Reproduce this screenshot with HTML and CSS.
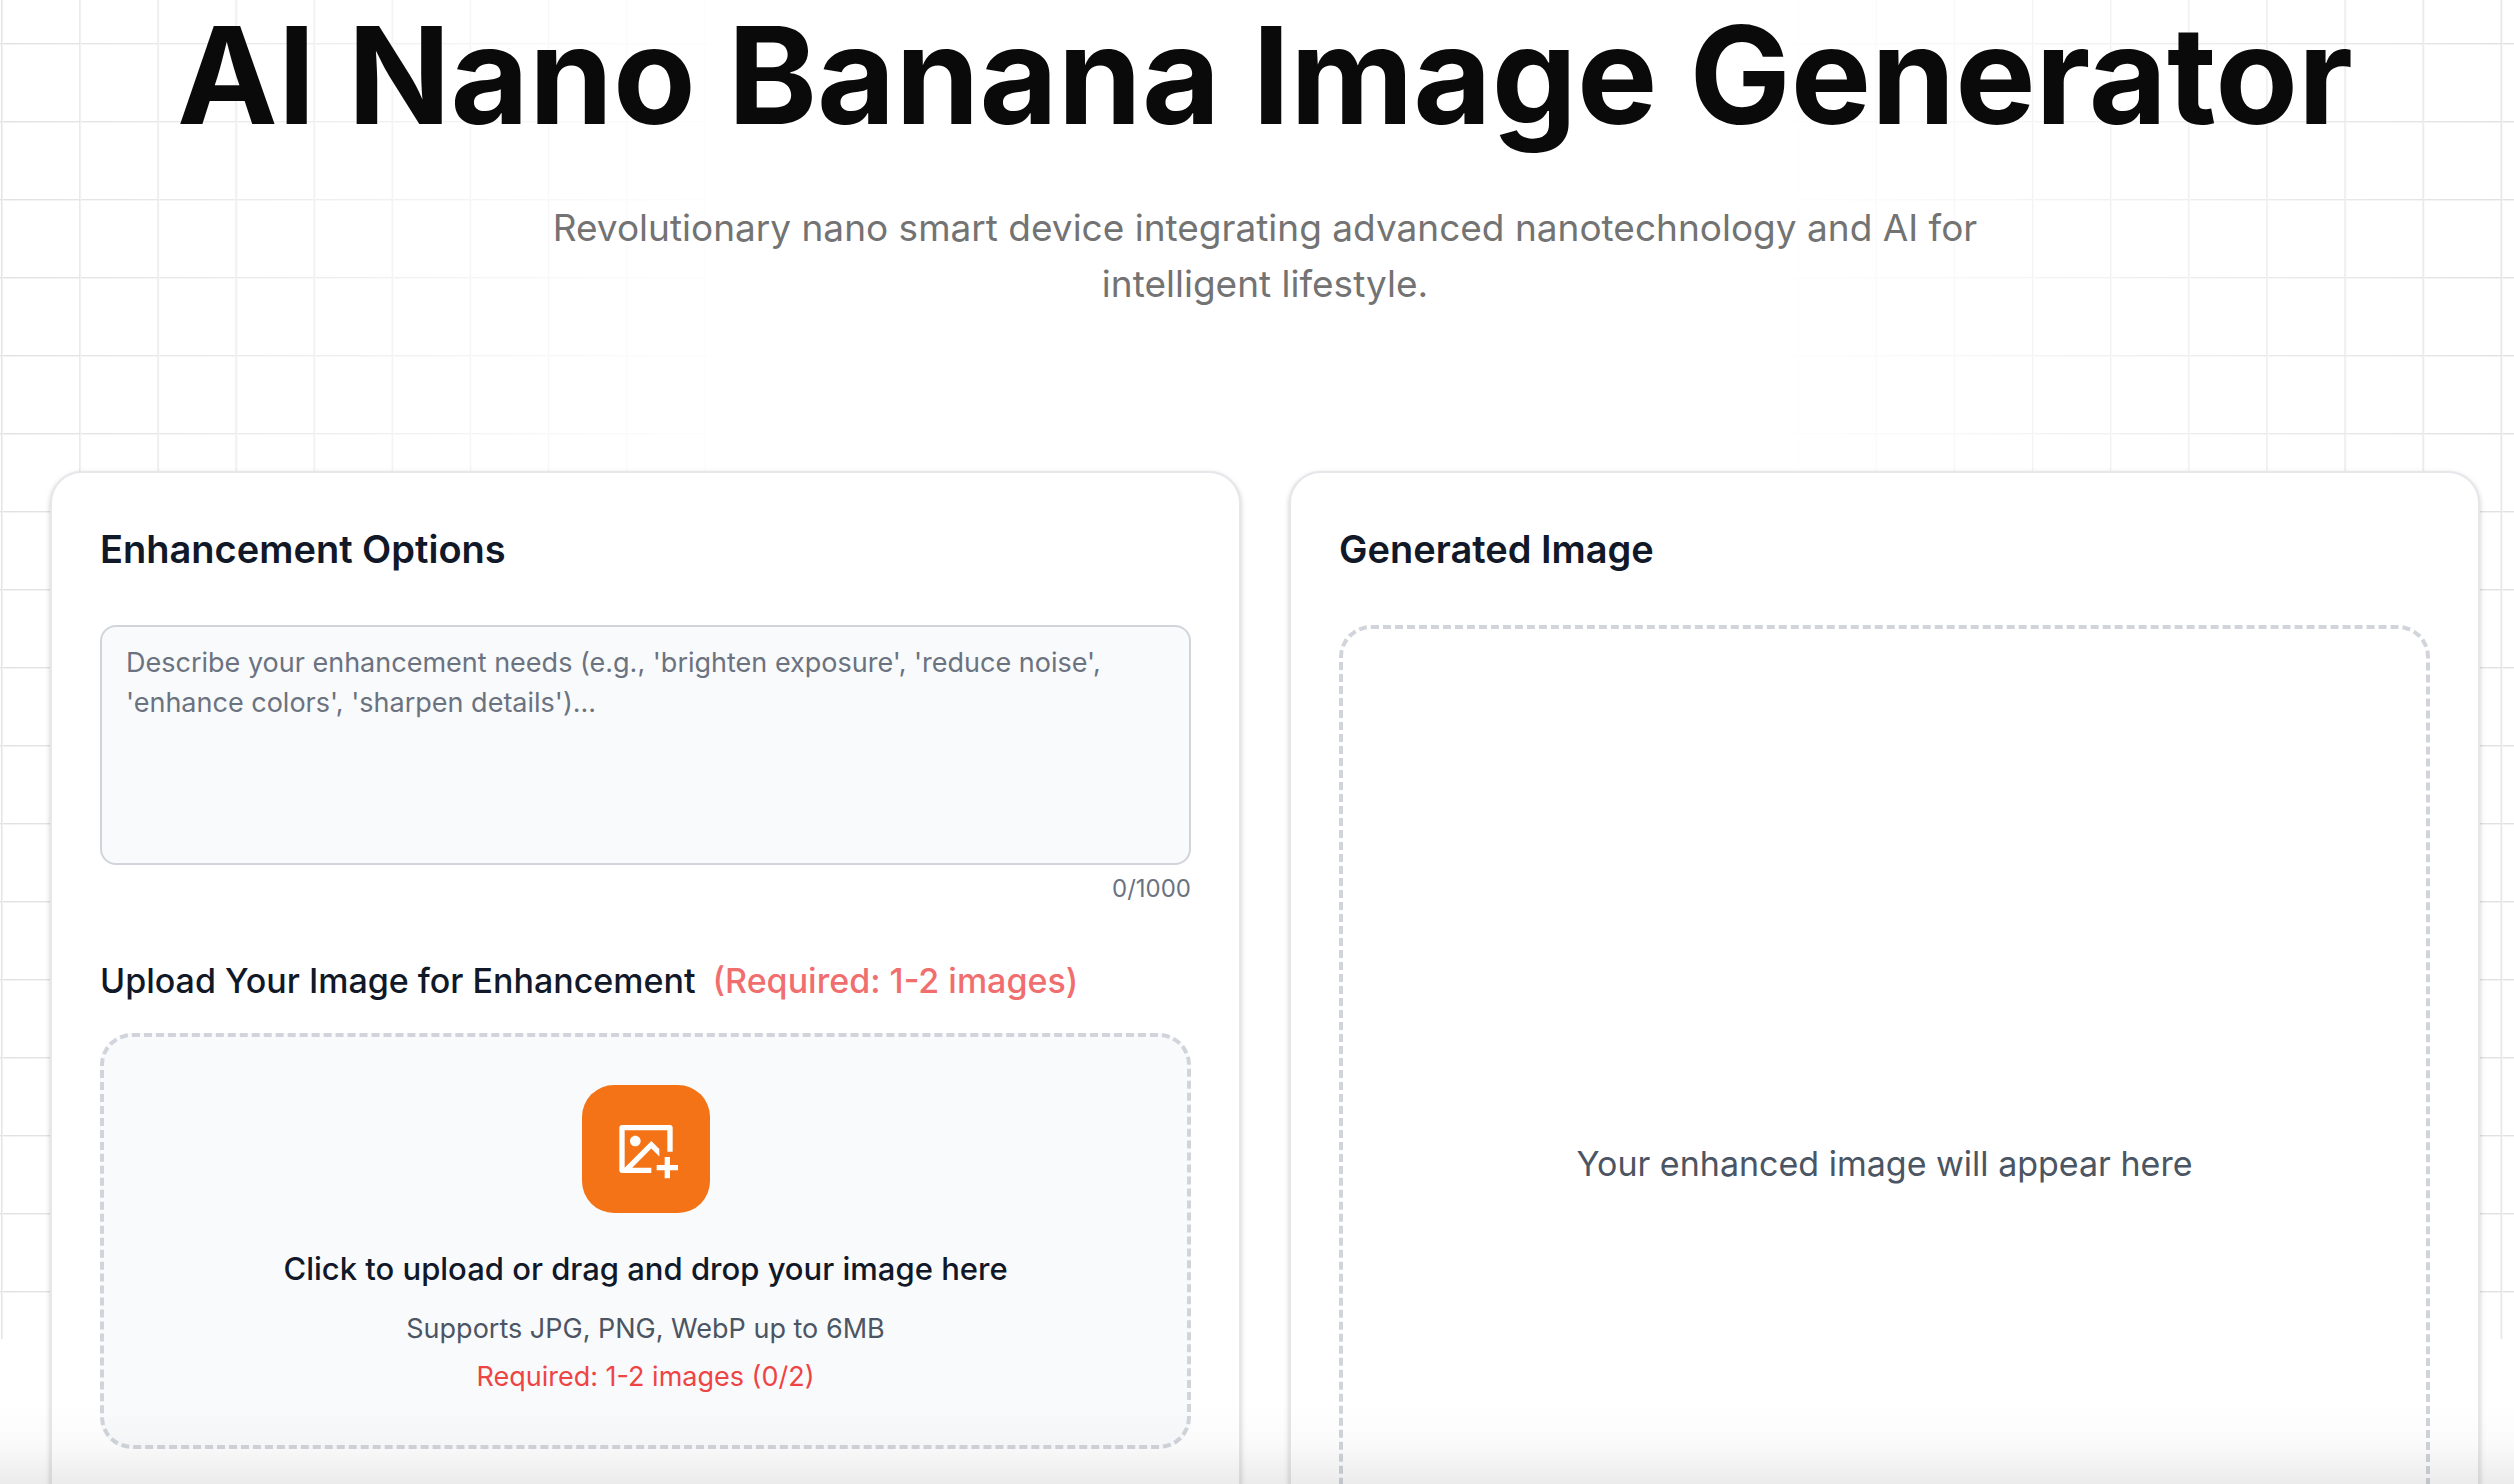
FILE: index.html
```html
<!DOCTYPE html>
<html lang="en">
<head>
  <meta charset="UTF-8">
  <meta name="viewport" content="width=device-width, initial-scale=1">
  <title>AI Nano Banana Image Generator</title>
  <link rel="stylesheet" href="styles.css">
</head>
<body>
  <div class="page">
    <div class="grid-bg"></div>

    <header class="hero">
      <h1>AI Nano Banana Image Generator</h1>
      <p>Revolutionary nano smart device integrating advanced nanotechnology and AI for intelligent lifestyle.</p>
    </header>

    <main class="panels">
      <section class="card">
        <h2>Enhancement Options</h2>
        <textarea class="prompt" id="prompt" maxlength="1000" aria-label="Enhancement needs" placeholder="Describe your enhancement needs (e.g., 'brighten exposure', 'reduce noise', 'enhance colors', 'sharpen details')..."></textarea>
        <div class="counter"><span id="promptCount">0</span>/1000</div>

        <h3>Upload Your Image for Enhancement <span class="required">(Required: 1-2 images)</span></h3>
        <label class="dropzone" for="fileInput">
          <input type="file" id="fileInput" accept=".jpg,.jpeg,.png,.webp" multiple>
          <span class="upload-icon">
            <svg viewBox="0 0 24 24" fill="currentColor" aria-hidden="true">
              <path d="M21 15V18H24V20H21V23H19V20H16V18H19V15H21ZM21.0082 3C21.556 3 22 3.44495 22 3.9934V13H20V5H4V18.999L14 9L17 12V14.829L14 11.8284L6.827 19H14V21H2.9918C2.44405 21 2 20.5551 2 20.0066V3.9934C2 3.44476 2.45531 3 2.9918 3H21.0082ZM8 7C9.10457 7 10 7.89543 10 9C10 10.1046 9.10457 11 8 11C6.89543 11 6 10.1046 6 9C6 7.89543 6.89543 7 8 7Z"/>
            </svg>
          </span>
          <span class="drop-title">Click to upload or drag and drop your image here</span>
          <span class="drop-hint">Supports JPG, PNG, WebP up to 6MB</span>
          <span class="drop-required">Required: 1-2 images (0/2)</span>
        </label>
      </section>

      <section class="card">
        <h2>Generated Image</h2>
        <div class="preview">
          <p>Your enhanced image will appear here</p>
        </div>
      </section>
    </main>

    <div class="bottom-fade"></div>
  </div>

  <script>
    const promptBox = document.getElementById('prompt');
    promptBox.addEventListener('input', function () {
      document.getElementById('promptCount').textContent = promptBox.value.length;
    });
  </script>
</body>
</html>
```
FILE: styles.css
```css
*, *::before, *::after {
  box-sizing: border-box;
}
body {
  margin: 0;
  background: #fff;
  color: #0a0a0a;
  font-family: Inter, "Liberation Sans", sans-serif;
}
h1, h2, h3, p {
  margin: 0;
}
.page {
  position: relative;
  height: 100vh;
  overflow: hidden;
  padding: 0 34px 0 50px;
}

/* Faded grid behind the hero */
.grid-bg {
  position: absolute;
  top: -35px;
  left: -77px;
  right: -65px;
  height: 1374px;
  background-image:
    linear-gradient(to right, #dedede 1px, #f2f2f2 1px, #f2f2f2 2px, transparent 2px),
    linear-gradient(to bottom, #dedede 1px, #f2f2f2 1px, #f2f2f2 2px, transparent 2px);
  background-size: 78px 78px;
  background-repeat: round repeat;
  -webkit-mask-image: linear-gradient(to right, #000, transparent 31%, transparent 69%, #000);
  mask-image: linear-gradient(to right, #000, transparent 31%, transparent 69%, #000);
}

.hero {
  position: relative;
  text-align: center;
}
.hero h1 {
  font-size: 135px;
  line-height: 150px;
  font-weight: 700;
  white-space: nowrap;
}
.hero p {
  max-width: 1440px;
  margin: 50px auto 0;
  font-size: 37px;
  line-height: 56px;
  color: #737373;
}

.panels {
  position: relative;
  display: grid;
  grid-template-columns: 1fr 1fr;
  gap: 48px;
  margin-top: 159px;
}
.card {
  padding: 48px;
  background: #fff;
  border: 2px solid #e5e7eb;
  border-radius: 32px;
  box-shadow: 0 2px 6px rgba(0, 0, 0, 0.1), 0 2px 4px rgba(0, 0, 0, 0.1);
}
.card h2 {
  margin-bottom: 48px;
  font-size: 38px;
  line-height: 56px;
  font-weight: 600;
  color: #111827;
}

/* Prompt */
.prompt {
  display: block;
  width: 100%;
  height: 240px;
  padding: 16px 24px;
  border: 2px solid #d1d5db;
  border-radius: 16px;
  background: #f9fafb;
  color: #111827;
  font-family: inherit;
  font-size: 27px;
  line-height: 40px;
  resize: none;
}
.prompt::placeholder {
  color: #6b7280;
  opacity: 1;
}
.counter {
  margin-top: 8px;
  text-align: right;
  font-size: 24px;
  line-height: 32px;
  color: #6b7280;
}

/* Upload */
.card h3 {
  margin: 48px 0 24px;
  font-size: 34px;
  line-height: 56px;
  font-weight: 500;
  color: #111827;
}
.required {
  margin-left: 8px;
  color: #f06e6e;
}
.dropzone {
  display: flex;
  flex-direction: column;
  align-items: center;
  padding: 48px;
  border: 4px dashed #d1d5db;
  border-radius: 32px;
  background: #f9fafb;
  cursor: pointer;
}
.dropzone input {
  display: none;
}
.upload-icon {
  display: flex;
  align-items: center;
  justify-content: center;
  width: 128px;
  height: 128px;
  border-radius: 32px;
  background: #f37316;
  color: #fff;
}
.upload-icon svg {
  width: 64px;
  height: 64px;
}
.drop-title {
  margin-top: 32px;
  font-size: 31px;
  line-height: 48px;
  font-weight: 500;
  color: #111827;
}
.drop-hint, .drop-required {
  font-size: 27px;
  line-height: 40px;
}
.drop-hint {
  margin-top: 16px;
  color: #4b5563;
}
.drop-required {
  margin-top: 8px;
  color: #ef4444;
}

/* Result */
.preview {
  display: flex;
  align-items: center;
  justify-content: center;
  min-height: 1078px;
  border: 4px dashed #d1d5db;
  border-radius: 32px;
}
.preview p {
  font-size: 34px;
  line-height: 56px;
  color: #4b5563;
}

.bottom-fade {
  position: absolute;
  left: 0;
  right: 0;
  bottom: 0;
  height: 80px;
  background: linear-gradient(to bottom, transparent, rgba(0, 0, 0, 0.02) 50%, rgba(0, 0, 0, 0.08));
  pointer-events: none;
}
```
